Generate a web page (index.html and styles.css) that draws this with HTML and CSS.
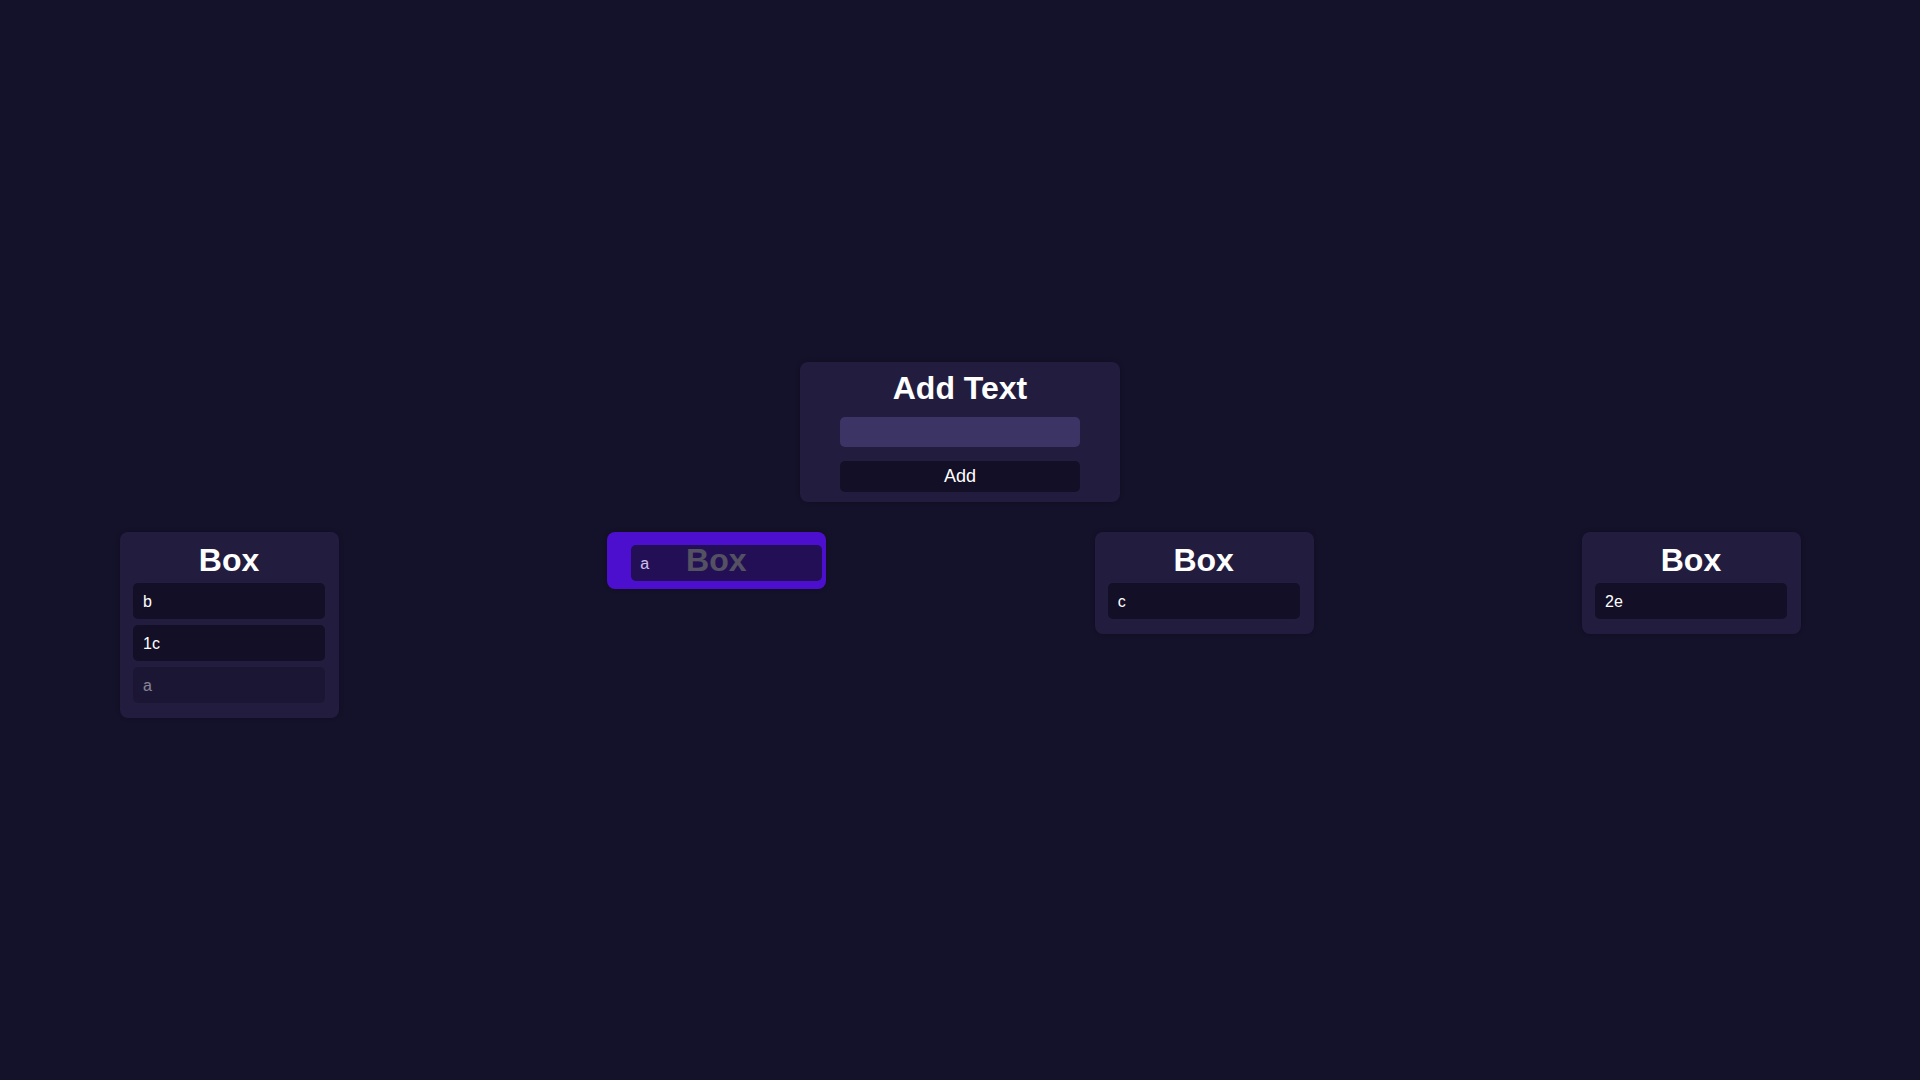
FILE: index.html
```html
<!DOCTYPE html>
<html lang="en">
<head>
<meta charset="utf-8">
<title>Boxes</title>
<link rel="stylesheet" href="styles.css">
</head>
<body>
<main class="app">
  <section class="add-panel">
    <h1 class="panel-title">Add Text</h1>
    <input class="add-input" type="text" aria-label="Text">
    <button class="add-button" type="button">Add</button>
  </section>
  <section class="board">
    <div class="box">
      <h2 class="box-title">Box</h2>
      <ul class="items">
        <li class="item">b</li>
        <li class="item">1c</li>
        <li class="item item-ghost">a</li>
      </ul>
    </div>
    <div class="box box-over">
      <h2 class="box-title">Box</h2>
      <ul class="items"></ul>
      <div class="item drag-overlay">a</div>
    </div>
    <div class="box">
      <h2 class="box-title">Box</h2>
      <ul class="items">
        <li class="item">c</li>
      </ul>
    </div>
    <div class="box">
      <h2 class="box-title">Box</h2>
      <ul class="items">
        <li class="item">2e</li>
      </ul>
    </div>
  </section>
</main>
</body>
</html>
```
FILE: styles.css
```css
* { box-sizing: border-box; }

html, body {
  margin: 0;
  padding: 0;
  height: 100%;
}

body {
  background: #14112a;
  color: #ffffff;
  font-family: "Liberation Sans", Arial, sans-serif;
}

.app {
  min-height: 100vh;
  display: flex;
  flex-direction: column;
  justify-content: center;
  align-items: center;
  gap: 30px;
}

.add-panel {
  width: 320px;
  background: #221d3f;
  border-radius: 8px;
  padding: 8px 40px 10px;
  display: flex;
  flex-direction: column;
  align-items: stretch;
  box-shadow: 0 0 4px rgba(0, 0, 0, 0.25);
}

.panel-title {
  margin: 0;
  font-size: 32px;
  line-height: 37px;
  font-weight: bold;
  text-align: center;
}

.add-input {
  margin-top: 10px;
  height: 30px;
  border: none;
  border-radius: 5px;
  background: #3d3466;
  color: #fff;
  font: 16px "Liberation Sans", Arial, sans-serif;
  padding: 0 10px;
  outline: none;
}

.add-button {
  margin-top: 14px;
  height: 31px;
  border: none;
  border-radius: 5px;
  background: #130f26;
  color: #ffffff;
  font: 18px "Liberation Sans", Arial, sans-serif;
  padding: 0;
}

.board {
  width: 100%;
  padding: 0 119px 0 120px;
  display: flex;
  justify-content: space-between;
  align-items: flex-start;
}

.box {
  position: relative;
  width: 219px;
  background: #221d3f;
  border-radius: 8px;
  padding: 10px 14px 9px 13px;
  box-shadow: 0 0 4px rgba(0, 0, 0, 0.25);
}

.box-over {
  background: #4b0fcd;
}

.box-title {
  margin: 0;
  font-size: 32px;
  line-height: 37px;
  font-weight: bold;
  text-align: center;
}

.items {
  list-style: none;
  margin: 4px 0 0;
  padding: 0;
}

.items:empty {
  margin: 0 0 1px;
}

.item {
  height: 36px;
  margin-bottom: 6px;
  display: flex;
  align-items: center;
  padding: 1px 10px 0;
  background: #130f27;
  border-radius: 5px;
  font-size: 16px;
  color: #ffffff;
}

.item-ghost {
  opacity: 0.45;
}

.drag-overlay {
  position: absolute;
  left: 24px;
  top: 13px;
  width: 191px;
  margin: 0;
  padding: 1px 9px 0;
  opacity: 0.72;
}
```
